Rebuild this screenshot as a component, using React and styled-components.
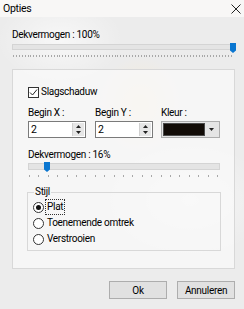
import React from 'react'
import styled, { createGlobalStyle } from 'styled-components'

const GlobalStyle = createGlobalStyle`
  html, body {
    margin: 0;
    padding: 0;
  }
  body {
    font-family: Roboto, "Liberation Sans", sans-serif;
    font-size: 10px;
    letter-spacing: -0.3px;
    color: #000;
  }
`

const Window = styled.div`
  width: 244px;
  height: 309px;
  display: flex;
  flex-direction: column;
  overflow: hidden;
  background:
    radial-gradient(ellipse 60px 70px at 140px 105px, rgba(250, 236, 200, 0.55), transparent 70%),
    radial-gradient(ellipse 90px 60px at 60px 40px, rgba(255, 255, 255, 0.6), transparent 70%),
    radial-gradient(ellipse 120px 80px at 190px 200px, rgba(255, 255, 255, 0.5), transparent 70%),
    #ececec;
`

const TitleBar = styled.div`
  height: 17px;
  display: flex;
  align-items: center;
  justify-content: space-between;
  padding: 0 3px 0 3px;
  background: #f8f7f6;
  font-size: 10.5px;
`

const Close = styled.svg`
  width: 10px;
  height: 10px;
`

const Content = styled.div`
  padding: 0 9px 0 12px;
  display: flex;
  flex-direction: column;
`

const Label = styled.div`
  line-height: 14px;
  height: 14px;
  margin-top: ${p => p.$top || 0}px;
  white-space: nowrap;
`

const SliderWrap = styled.div`
  margin-top: ${p => p.$top || 0}px;
  width: ${p => p.$width}px;
`

const Track = styled.div`
  position: relative;
  height: ${p => p.$h}px;
  box-sizing: border-box;
  background: #e4e4e4;
  border: 1px solid #d4d4d4;
`

const Thumb = styled.svg`
  position: absolute;
  top: -2px;
  width: 6px;
  height: 10px;
`

const Ticks = styled.div`
  margin-top: 5px;
  height: 2px;
  margin-left: 1px;
  margin-right: 2px;
  background: repeating-linear-gradient(
    to right,
    #a8a8a8 0,
    #a8a8a8 1px,
    transparent 1px,
    transparent ${p => p.$step}px
  );
`

const Panel = styled.div`
  margin-top: 12px;
  width: 223px;
  box-sizing: border-box;
  border: 1px solid #d8d8d8;
  background: rgba(250, 250, 249, 0.75);
  padding: 15px 0 17px 15px;
  display: flex;
  flex-direction: column;
`

const CheckRow = styled.label`
  display: flex;
  align-items: center;
  gap: 2px;
  line-height: 14px;
`

const Box = styled.span`
  width: 11px;
  height: 11px;
  box-sizing: border-box;
  border: 1px solid #333;
  background: #fff;
  display: flex;
  align-items: center;
  justify-content: center;
`

const Fields = styled.div`
  display: grid;
  grid-template-columns: 67px 66px 59px;
  margin-top: 7px;
`

const Field = styled.div`
  display: flex;
  flex-direction: column;
  gap: 1px;
`

const Spin = styled.div`
  width: 58px;
  height: 17px;
  box-sizing: border-box;
  border: 1px solid #7a7a7a;
  background: #fff;
  display: flex;
  align-items: stretch;
`

const SpinText = styled.div`
  flex: 1;
  padding-left: 2px;
  line-height: 15px;
  font-size: 10.5px;
`

const SpinButtons = styled.div`
  width: 11px;
  margin: 1px;
  display: flex;
  flex-direction: column;
  background: #e6e6e6;
  border-left: 1px solid #d0d0d0;
`

const SpinBtn = styled.div`
  flex: 1;
  display: flex;
  align-items: center;
  justify-content: center;
`

const ColorPick = styled.div`
  width: 59px;
  height: 17px;
  box-sizing: border-box;
  border: 1px solid #adadad;
  background: #e5e5e5;
  display: flex;
  align-items: stretch;
  padding: 1px;
`

const Swatch = styled.div`
  width: 42px;
  background: ${p => p.$color};
  border: 1px solid #4a4a4a;
  box-sizing: border-box;
`

const Arrow = styled.div`
  flex: 1;
  display: flex;
  align-items: center;
  justify-content: center;
`

const Group = styled.fieldset`
  margin: 8px 0 0 -1px;
  width: 194px;
  box-sizing: border-box;
  border: 1px solid #d8d8d8;
  padding: 0 0 3px 5px;
  min-width: 0;
`

const Legend = styled.legend`
  padding: 0 1px;
  margin-left: 1px;
  line-height: 14px;
`

const RadioRow = styled.label`
  display: flex;
  align-items: center;
  gap: 2px;
  height: 16px;
  line-height: 14px;
`

const Circle = styled.span`
  width: 11px;
  height: 11px;
  box-sizing: border-box;
  border: 1px solid #333;
  border-radius: 50%;
  background: #fff;
  display: flex;
  align-items: center;
  justify-content: center;
  &::after {
    content: '';
    width: 5px;
    height: 5px;
    border-radius: 50%;
    background: ${p => (p.$checked ? '#111' : 'transparent')};
  }
`

const RadioText = styled.span`
  outline: ${p => (p.$focus ? '1px dotted #333' : 'none')};
  padding: 0 1px;
`

const ButtonRow = styled.div`
  margin-top: 12px;
  width: 223px;
  display: flex;
  justify-content: flex-end;
  gap: 10px;
`

const Button = styled.button`
  width: 58px;
  height: 18px;
  box-sizing: border-box;
  border: 1px solid #adadad;
  background: #e1e1e1;
  font-family: inherit;
  font-size: 10px;
  letter-spacing: -0.3px;
  color: #000;
  padding: 0;
  line-height: 15px;
`

const Tri = ({ up }) => (
  <svg width="5" height="3" viewBox="0 0 5 3">
    <polygon points={up ? '0,3 5,3 2.5,0' : '0,0 5,0 2.5,3'} fill="#222" />
  </svg>
)

const Slider = ({ value, width, top, trackH, step }) => {
  const left = ((width - 6) * value) / 100
  return (
    <SliderWrap $top={top} $width={width}>
      <Track $h={trackH}>
        <Thumb viewBox="0 0 6 10" style={{ left }}>
          <polygon points="0,0 6,0 6,7.5 3,10 0,7.5" fill="#0a76d0" />
        </Thumb>
      </Track>
      <Ticks $step={step} />
    </SliderWrap>
  )
}

const SpinBox = ({ value }) => (
  <Spin>
    <SpinText>{value}</SpinText>
    <SpinButtons>
      <SpinBtn><Tri up /></SpinBtn>
      <SpinBtn><Tri /></SpinBtn>
    </SpinButtons>
  </Spin>
)

const styles = [
  { label: 'Plat', checked: true },
  { label: 'Toenemende omtrek' },
  { label: 'Verstrooien' },
]

export default function App() {
  return (
    <Window>
      <GlobalStyle />
      <TitleBar>
        <span>Opties</span>
        <Close viewBox="0 0 10 10">
          <path d="M0.5 0.5 L9.5 9.5 M9.5 0.5 L0.5 9.5" stroke="#222" strokeWidth="1" />
        </Close>
      </TitleBar>
      <Content>
        <Label $top={11}>Dekvermogen : 100%</Label>
        <Slider value={100} width={223} top={2} trackH={6} step={2.9} />

        <Panel>
          <CheckRow>
            <Box>
              <svg width="9" height="9" viewBox="0 0 9 9">
                <path d="M1 4.5 L3.5 7 L8 1.5" stroke="#222" strokeWidth="1" fill="none" />
              </svg>
            </Box>
            Slagschaduw
          </CheckRow>

          <Fields>
            <Field>
              <Label>Begin X :</Label>
              <SpinBox value="2" />
            </Field>
            <Field>
              <Label>Begin Y :</Label>
              <SpinBox value="2" />
            </Field>
            <Field>
              <Label>Kleur :</Label>
              <ColorPick>
                <Swatch $color="#120c07" />
                <Arrow><Tri /></Arrow>
              </ColorPick>
            </Field>
          </Fields>

          <Label $top={10}>Dekvermogen : 16%</Label>
          <Slider value={8} width={192} top={1} trackH={7} step={9.4} />

          <Group>
            <Legend>Stijl</Legend>
            {styles.map(s => (
              <RadioRow key={s.label}>
                <Circle $checked={s.checked} />
                <RadioText $focus={s.checked}>{s.label}</RadioText>
              </RadioRow>
            ))}
          </Group>
        </Panel>

        <ButtonRow>
          <Button>Ok</Button>
          <Button>Annuleren</Button>
        </ButtonRow>
      </Content>
    </Window>
  )
}
